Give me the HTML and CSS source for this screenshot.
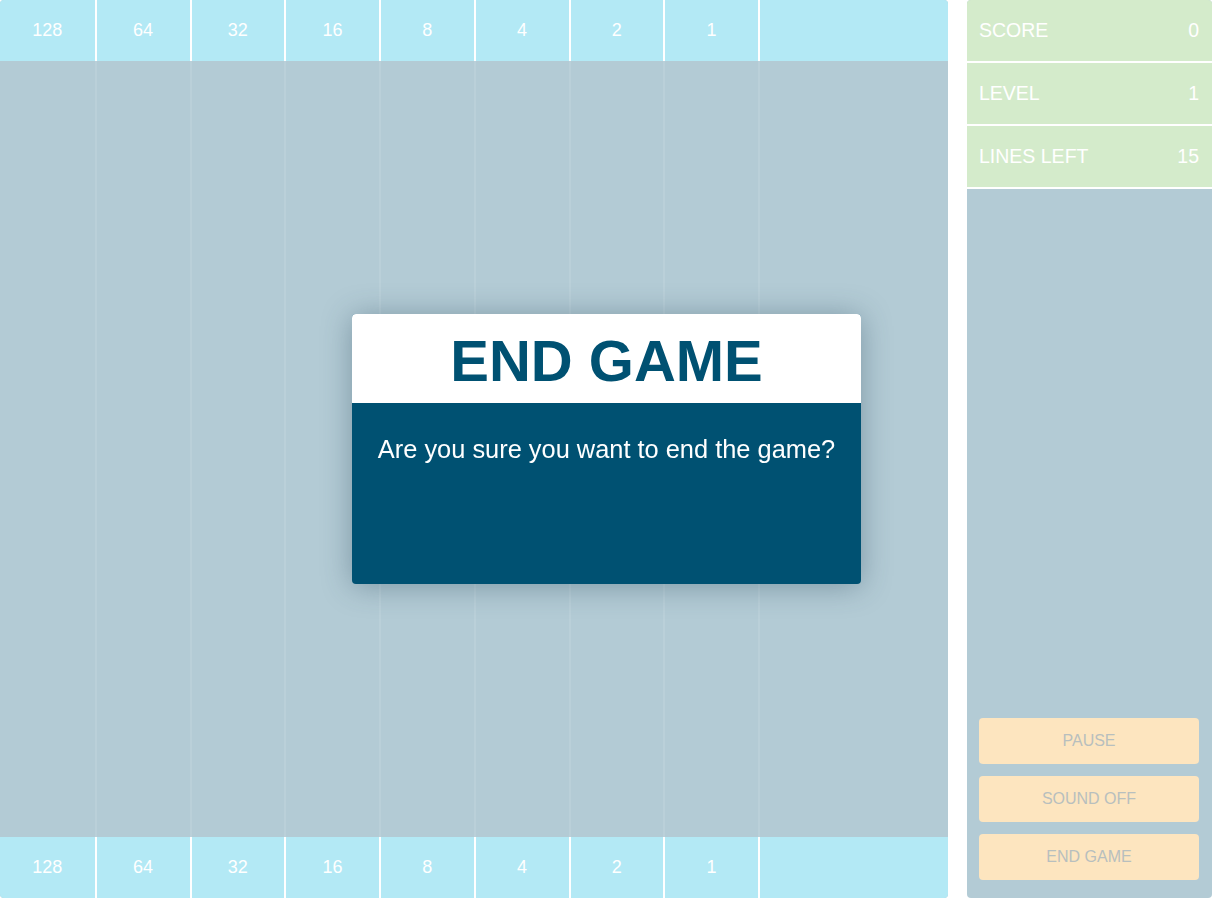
FILE: index.html
```html
<!DOCTYPE html>
<html>
<head>
<meta charset="utf-8">
<link rel="stylesheet" href="styles.css">
</head>
<body>
<div class="app">
  <div class="board">
    <div class="bits top">
      <div class="bit">128</div><div class="bit">64</div><div class="bit">32</div><div class="bit">16</div>
      <div class="bit">8</div><div class="bit">4</div><div class="bit">2</div><div class="bit">1</div><div class="bit last"></div>
    </div>
    <div class="field">
      <div class="col"></div><div class="col"></div><div class="col"></div><div class="col"></div>
      <div class="col"></div><div class="col"></div><div class="col"></div><div class="col"></div><div class="col last"></div>
    </div>
    <div class="bits bottom">
      <div class="bit">128</div><div class="bit">64</div><div class="bit">32</div><div class="bit">16</div>
      <div class="bit">8</div><div class="bit">4</div><div class="bit">2</div><div class="bit">1</div><div class="bit last"></div>
    </div>
  </div>
  <div class="side">
    <div class="stat"><span>SCORE</span><span>0</span></div>
    <div class="stat"><span>LEVEL</span><span>1</span></div>
    <div class="stat"><span>LINES LEFT</span><span>15</span></div>
    <div class="spacer"></div>
    <div class="buttons">
      <button class="btn">PAUSE</button>
      <button class="btn">SOUND OFF</button>
      <button class="btn">END GAME</button>
    </div>
  </div>
</div>
<div class="modal">
  <div class="modal-head">END GAME</div>
  <div class="modal-body">Are you sure you want to end the game?</div>
</div>
</body>
</html>
```
FILE: styles.css
```css
html, body {
  margin: 0;
  padding: 0;
  background: #ffffff;
  font-family: "Liberation Sans", Arial, sans-serif;
}
.app {
  display: flex;
  height: 898px;
  width: 1216px;
}
.board {
  width: 948px;
  display: flex;
  flex-direction: column;
  border-radius: 4px;
  overflow: hidden;
  background: #b3cbd5;
}
.bits {
  height: 61px;
  display: grid;
  grid-template-columns: repeat(8, 94.75px) 1fr;
  background: #b3e9f5;
}
.bit {
  display: flex;
  align-items: center;
  justify-content: center;
  color: #ffffff;
  font-size: 18px;
}
.bit + .bit {
  border-left: 2px solid #ffffff;
}
.field {
  flex: 1;
  display: grid;
  grid-template-columns: repeat(8, 94.75px) 1fr;
}
.col + .col {
  border-left: 2px solid rgba(255, 255, 255, 0.1);
}
.side {
  margin-left: 19px;
  width: 245px;
  background: #b3cbd5;
  border-radius: 4px;
  overflow: hidden;
  display: flex;
  flex-direction: column;
}
.stat {
  height: 61px;
  background: #d4ebcb;
  border-bottom: 2px solid #ffffff;
  display: flex;
  align-items: center;
  justify-content: space-between;
  padding: 0 13px 0 12px;
  color: #ffffff;
  font-size: 19.5px;
}
.spacer {
  flex: 1;
}
.buttons {
  display: flex;
  flex-direction: column;
  gap: 12px;
  padding: 0 13px 18px 12px;
}
.btn {
  height: 46px;
  border: none;
  border-radius: 4px;
  background: #fde5bf;
  color: #b8bfbe;
  font-family: "Liberation Sans", Arial, sans-serif;
  font-size: 16px;
  padding: 0;
}
.modal {
  position: fixed;
  left: 352px;
  top: 314px;
  width: 509px;
  height: 270px;
  border-radius: 4px;
  overflow: hidden;
  background: #005172;
  box-shadow: 0 2px 30px rgba(40, 70, 90, 0.4);
  display: flex;
  flex-direction: column;
}
.modal-head {
  height: 89px;
  background: #ffffff;
  color: #005172;
  font-weight: bold;
  font-size: 58px;
  display: flex;
  align-items: center;
  justify-content: center;
  padding-top: 4px;
  box-sizing: border-box;
}
.modal-body {
  color: #ffffff;
  font-size: 25.4px;
  text-align: center;
  padding-top: 32px;
}
```
